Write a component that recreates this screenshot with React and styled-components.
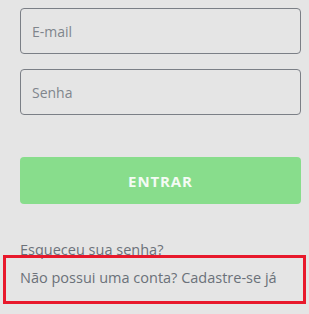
import React from 'react'
import styled, { createGlobalStyle } from 'styled-components'

const GlobalStyle = createGlobalStyle`
    html, body {
        margin: 0;
        padding: 0;
        background: #e5e5e5;
    }
    body {
        font-family: "Open Sans", "Liberation Sans", sans-serif;
        min-height: 314px;
    }
`

const Form = styled.form`
    display: flex;
    flex-direction: column;
    padding: 8px 8px 20px 20px;
    width: 281px;
`

const Input = styled.input`
    box-sizing: border-box;
    height: 46px;
    width: 100%;
    margin-bottom: ${p => p.$gap || 0}px;
    padding: 0 11px;
    border: 1px solid #7b7f86;
    border-radius: 4px;
    background: #e5e5e5;
    font-family: inherit;
    font-size: 14px;
    color: #555;
    outline: none;
    &::placeholder {
        color: #80858c;
    }
`

const Button = styled.button`
    height: 47px;
    width: 100%;
    margin-top: 42px;
    border: none;
    border-radius: 4px;
    background: #88dd8c;
    color: #f4fbf4;
    font-family: inherit;
    font-weight: 700;
    font-size: 15px;
    letter-spacing: 0.9px;
    cursor: pointer;
`

const Links = styled.div`
    display: flex;
    flex-direction: column;
    margin-top: 37px;
`

const TextLink = styled.a`
    display: block;
    position: relative;
    font-size: 14.5px;
    line-height: 18px;
    color: #6b7179;
    text-decoration: none;
    margin-top: ${p => p.$gap || 0}px;

    ${p => p.$marked && `
        &::after {
            content: '';
            position: absolute;
            left: -17px;
            right: -5px;
            top: -14px;
            bottom: -17px;
            border: 3px solid #e8192c;
        }
    `}
`

const App = () => {
    return (
        <>
            <GlobalStyle />
            <Form onSubmit={e => e.preventDefault()}>
                <Input type='email' placeholder='E-mail' $gap={15} />
                <Input type='password' placeholder='Senha' />
                <Button type='submit'>ENTRAR</Button>
                <Links>
                    <TextLink href='#'>Esqueceu sua senha?</TextLink>
                    <TextLink href='#' $gap={10} $marked>Não possui uma conta? Cadastre-se já</TextLink>
                </Links>
            </Form>
        </>
    )
}

export default App
